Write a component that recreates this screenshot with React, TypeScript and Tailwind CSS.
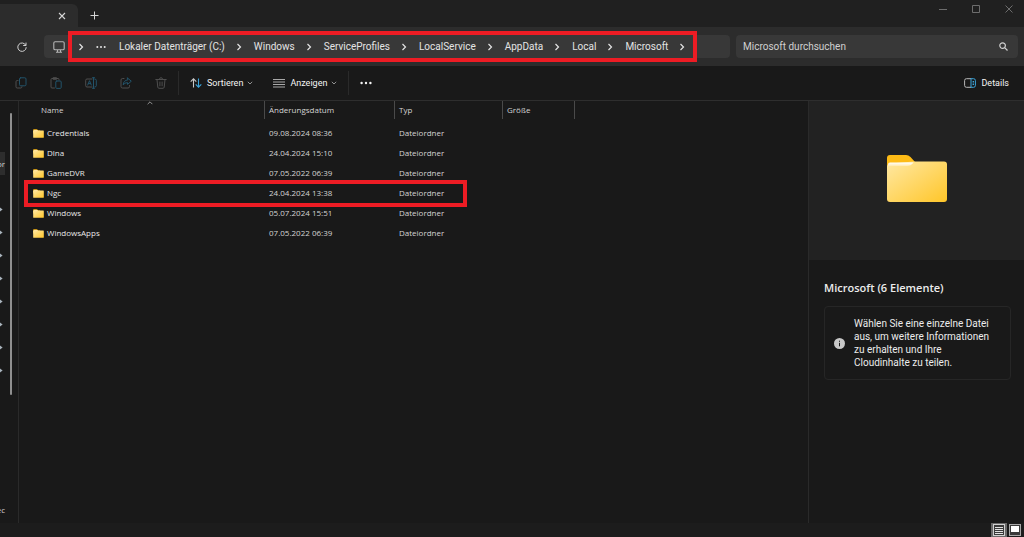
import React from "react";

type FileRow = { name: string; date: string; highlighted?: boolean };

const files: FileRow[] = [
  { name: "Credentials", date: "09.08.2024 08:36" },
  { name: "Dlna", date: "24.04.2024 15:10" },
  { name: "GameDVR", date: "07.05.2022 06:39" },
  { name: "Ngc", date: "24.04.2024 13:38", highlighted: true },
  { name: "Windows", date: "05.07.2024 15:51" },
  { name: "WindowsApps", date: "07.05.2022 06:39" },
];

const crumbs = [
  "Lokaler Datenträger (C:)",
  "Windows",
  "ServiceProfiles",
  "LocalService",
  "AppData",
  "Local",
  "Microsoft",
];

const pins = [0, 1, 2, 3, 4, 5, 6, 7];

function Chevron() {
  return (
    <svg viewBox="0 0 6 8" className="h-2 w-[6px] shrink-0" fill="none" stroke="currentColor" strokeWidth="1.2">
      <path d="M1.5 1 4.5 4 1.5 7" />
    </svg>
  );
}

function ChevronDown() {
  return (
    <svg viewBox="0 0 6 4" className="h-1 w-[6px] shrink-0 text-[#a0a0a0]" fill="none" stroke="currentColor" strokeWidth="0.9">
      <path d="M0.8 0.8 3 3 5.2 0.8" />
    </svg>
  );
}

function Dots({ className }: { className: string }) {
  return (
    <svg viewBox="0 0 12 4" className={className} fill="currentColor">
      <circle cx="1.6" cy="2" r="1.2" />
      <circle cx="6" cy="2" r="1.2" />
      <circle cx="10.4" cy="2" r="1.2" />
    </svg>
  );
}

function FolderIcon({ id, className }: { id: string; className: string }) {
  return (
    <svg viewBox="0 0 62 49" className={className} preserveAspectRatio="none">
      <defs>
        <linearGradient id={`${id}-front`} x1="0" y1="0" x2="1" y2="1">
          <stop offset="0" stopColor="#ffe8a3" />
          <stop offset="1" stopColor="#ffc629" />
        </linearGradient>
        <linearGradient id={`${id}-shine`} x1="0" y1="0" x2="0" y2="1">
          <stop offset="0" stopColor="#ffffff" />
          <stop offset="1" stopColor="#ffe49a" />
        </linearGradient>
      </defs>
      <path d="M1 4Q1 1 4 1H20Q22.500 1 24.500 3L29 8H40V24H1Z" fill="#fdbb16" />
      <path d="M1 13Q1 10 4 9.500L28 7.500H58Q61 7.500 61 10.500V45Q61 48 58 48H4Q1 48 1 45Z" fill={`url(#${id}-front)`} />
      <path d="M2 10.500Q2 8.500 4 8.500H27.500Q25 12 21 12H4Q2.500 12 2 13Z" fill={`url(#${id}-shine)`} />
    </svg>
  );
}

function ToolButton({ label, children }: { label: string; children: React.ReactNode }) {
  return (
    <button aria-label={label} className="flex h-6 w-[35px] items-center justify-center text-[#4e4e4e]">
      <svg viewBox="0 0 12 12" className="h-3 w-3" fill="none" stroke="currentColor" strokeWidth="1" strokeLinejoin="round" strokeLinecap="round">
        {children}
      </svg>
    </button>
  );
}

function TitleBar() {
  return (
    <header className="flex h-[27px] items-end justify-between bg-[#202020]">
      <div className="flex h-[23px] items-center">
        <div className="flex h-full w-[78px] items-center justify-end rounded-tr-md bg-[#2c2c2c] pr-3">
          <button aria-label="Tab schließen" className="text-[#d6d6d6]">
            <svg viewBox="0 0 8 8" className="h-2 w-2" fill="none" stroke="currentColor" strokeWidth="1.1">
              <path d="M1 1 7 7M7 1 1 7" />
            </svg>
          </button>
        </div>
        <button aria-label="Neuer Tab" className="flex w-8 justify-center text-[#d6d6d6]">
          <svg viewBox="0 0 9 9" className="h-[9px] w-[9px]" fill="none" stroke="currentColor" strokeWidth="1">
            <path d="M4.500 0.500V8.500M0.500 4.500H8.500" />
          </svg>
        </button>
      </div>
      <div className="flex gap-[25px] self-start pt-[5px] pr-[11px] text-[#6d6d6d]">
        <button aria-label="Minimieren">
          <svg viewBox="0 0 8 8" className="h-2 w-2" fill="none" stroke="currentColor"><path d="M0 4.500H8" /></svg>
        </button>
        <button aria-label="Maximieren">
          <svg viewBox="0 0 8 8" className="h-2 w-2" fill="none" stroke="currentColor"><path d="M0.500 0.500H7.500V7.500H0.500Z" /></svg>
        </button>
        <button aria-label="Schließen">
          <svg viewBox="0 0 8 8" className="h-2 w-2" fill="none" stroke="currentColor"><path d="M0.500 0.500 7.500 7.500M7.500 0.500 0.500 7.500" /></svg>
        </button>
      </div>
    </header>
  );
}

function AddressBar() {
  return (
    <div className="flex h-[39px] items-center gap-[6px] bg-[#2c2c2c] pr-[6px] font-[Roboto,sans-serif]">
      <button aria-label="Aktualisieren" className="flex w-[38px] shrink-0 justify-center pl-[6px] text-[#d0d0d0]">
        <svg viewBox="0 0 10 10" className="h-[10px] w-[10px]" fill="none" stroke="currentColor" strokeWidth="1">
          <path d="M8.800 3.400A4.200 4.200 0 1 0 9.200 5.200M9 0.600V3.500H6.200" />
        </svg>
      </button>
      <div className="flex h-[23px] min-w-0 flex-1 items-center rounded bg-[#383838] text-[#e4e4e4]">
        <div className="flex w-7 shrink-0 justify-center pl-[2px]">
          <svg viewBox="0 0 12 12" className="h-3 w-3" fill="none" stroke="#b4b4b4" strokeWidth="1.1">
            <rect x="0.800" y="0.800" width="10.400" height="8" rx="1.300" />
            <path d="M4.500 9V11M7.500 9V11M3 11.200H9" />
          </svg>
        </div>
        <nav aria-label="Adresse" className="flex h-full items-center pr-2 pl-[6px] outline-4 outline-[#ed1c24]">
          <Chevron />
          <button aria-label="Weitere Ordner" className="flex w-[33px] justify-center"><Dots className="h-1 w-[10px]" /></button>
          {crumbs.map((crumb) => (
            <React.Fragment key={crumb}>
              <a href="#" className="pr-[11px] pl-3 text-[10px] leading-4 whitespace-nowrap first-of-type:pl-[2px]">{crumb}</a>
              <Chevron />
            </React.Fragment>
          ))}
        </nav>
      </div>
      <label className="flex h-[23px] w-[282px] shrink-0 items-center rounded bg-[#383838] pr-[10px] pl-[7px]">
        <input type="search" aria-label="Microsoft durchsuchen" placeholder="Microsoft durchsuchen" className="min-w-0 flex-1 bg-transparent text-[10px] leading-4 text-[#d0d0d0] outline-none placeholder:text-[#d0d0d0]" />
        <svg viewBox="0 0 9 9" className="h-[9px] w-[9px]" fill="none" stroke="#d0d0d0" strokeWidth="1.200">
          <circle cx="3.600" cy="3.600" r="2.800" />
          <path d="M5.700 5.700 8.500 8.500" />
        </svg>
      </label>
    </div>
  );
}

function Toolbar() {
  return (
    <div className="flex h-[35px] items-center justify-between border-b border-[#2e2e2e] bg-[#191919] font-[Roboto,sans-serif] text-[9px] leading-4 text-[#f4f4f4]">
      <div className="flex items-center">
        <div className="flex pl-[3px]">
          <ToolButton label="Kopieren">
            <rect x="4.500" y="0.800" width="6.500" height="8" rx="1.200" stroke="#22536a" />
            <path d="M3 3.500H2.200Q1 3.500 1 4.700V9.800Q1 11 2.200 11H5.800Q7 11 7 9.800" />
          </ToolButton>
          <ToolButton label="Einfügen">
            <path d="M4.500 11H2Q1 11 1 10V2.500Q1 1.500 2 1.500H8Q9 1.500 9 2.500V3M3.500 0.700H6.500V2.300H3.500Z" />
            <rect x="5.800" y="4" width="5.400" height="7.400" rx="1" stroke="#22536a" />
          </ToolButton>
          <ToolButton label="Umbenennen">
            <path d="M7 10H2Q0.700 10 0.700 8.700V3.300Q0.700 2 2 2H7" />
            <path d="M2.700 8 4.500 3.700 6.300 8M3.300 6.600H5.700M7.500 0.700H9.500M8.500 0.700V11.300M7.500 11.300H9.500M9.800 2Q11.300 2 11.300 3.300V8.700Q11.300 10 9.800 10" stroke="#22536a" />
          </ToolButton>
          <ToolButton label="Freigeben">
            <path d="M4 1.500H2.500Q1 1.500 1 3V9.500Q1 11 2.500 11H8Q9.500 11 9.500 9.500V8.500" />
            <path d="M7.500 1 11.300 4.200 7.500 7.400V5.600Q4.600 5.500 3.200 8Q3.400 3.400 7.500 2.900Z" stroke="#22536a" />
          </ToolButton>
          <ToolButton label="Löschen">
            <path d="M0.800 2.500H11.200M4.300 2.300Q4.500 0.700 6 0.700T7.700 2.300M2 2.700 2.800 10.200Q3 11.300 4 11.300H8Q9 11.300 9.200 10.200L10 2.700M4.900 5V8.800M7.100 5V8.800" />
          </ToolButton>
        </div>
        <button className="flex h-6 items-center gap-1 border-l border-[#2a2a2a] pr-[13px] pl-[11px]">
          <svg viewBox="0 0 12 10" className="mr-px h-[10px] w-3" fill="none" strokeWidth="1.100">
            <path d="M3.500 9.500V1M0.700 3.700 3.500 0.900 6.300 3.700" stroke="#c8c8c8" />
            <path d="M8.500 0.500V9M5.700 6.300 8.500 9.100 11.300 6.300" stroke="#3ba5dc" />
          </svg>
          <span className="whitespace-nowrap">Sortieren</span>
          <ChevronDown />
        </button>
        <button className="flex h-6 items-center gap-1 border-r border-[#2a2a2a] pr-[11px] pl-[7px]">
          <svg viewBox="0 0 12 9" className="mr-px h-[9px] w-3" stroke="#a8a8a8" strokeWidth="1">
            <path d="M0 0.500H12M0 3H12M0 5.500H12M0 8H12" />
          </svg>
          <span className="whitespace-nowrap">Anzeigen</span>
          <ChevronDown />
        </button>
        <button aria-label="Mehr anzeigen" className="px-[11px]"><Dots className="h-1 w-3" /></button>
      </div>
      <button className="flex items-center gap-[5px] pr-[15px]">
        <svg viewBox="0 0 12 10" className="h-[10px] w-3" fill="none" strokeWidth="1">
          <path d="M7 0.700H2.500Q0.600 0.700 0.600 2.500V7.500Q0.600 9.300 2.500 9.300H7" stroke="#b8b8b8" />
          <path d="M7 0.700H9.500Q11.400 0.700 11.400 2.500V7.500Q11.400 9.300 9.500 9.300H7ZM8.600 3.500H10M8.600 5H10M8.600 6.500H10" stroke="#3ba5dc" />
        </svg>
        Details
      </button>
    </div>
  );
}

function Sidebar() {
  return (
    <aside className="flex w-[19px] shrink-0 items-stretch border-r border-[#2a2a2a] bg-[#191919] text-[8px] leading-4 text-[#d0d0d0]">
      <div className="flex w-[5px] flex-col pt-[51px]">
        <div className="mb-[23px] flex h-[23px] items-center justify-end bg-[#2d2d2d]">or</div>
        {pins.map((pin) => (
          <div key={pin} className="flex h-[23px] items-center">
            <svg viewBox="0 0 3 5" className="h-[5px] w-[3px]" fill="#a9b4bd"><path d="M0 0.500 2.600 2.500 0 4.500Z" /></svg>
          </div>
        ))}
        <div className="mt-auto mb-[5px] flex justify-end">ec</div>
      </div>
      <div className="mt-3 ml-[5px] h-[282px] w-[2px] rounded-full bg-[#8f8f8f]" />
    </aside>
  );
}

function FileTable() {
  return (
    <main className="min-w-0 flex-1 bg-[#191919]">
      <table className="w-[556px] table-fixed border-collapse text-left text-[8px] leading-4 text-[#d4d4d4]">
        <colgroup>
          <col className="w-[246px]" />
          <col className="w-[130px]" />
          <col className="w-[108px]" />
          <col className="w-[72px]" />
        </colgroup>
        <thead>
          <tr className="h-[22px] align-top">
            <th className="p-0 font-normal">
              <div className="relative flex h-[18px] items-center border-r border-[#4a4a4a] pl-[22px]">
                Name
                <svg viewBox="0 0 6 4" className="absolute top-0 left-[128px] h-1 w-[6px]" fill="none" stroke="#a0a0a0" strokeWidth="0.900">
                  <path d="M0.600 3.200 3 0.800 5.400 3.200" />
                </svg>
              </div>
            </th>
            <th className="p-0 font-normal"><div className="flex h-[18px] items-center border-r border-[#4a4a4a] pl-1">Änderungsdatum</div></th>
            <th className="p-0 font-normal"><div className="flex h-[18px] items-center border-r border-[#4a4a4a] pl-1">Typ</div></th>
            <th className="p-0 font-normal"><div className="flex h-[18px] items-center border-r border-[#4a4a4a] pl-1">Größe</div></th>
          </tr>
        </thead>
        <tbody>
          {files.map((file) => (
            <tr key={file.name} className="h-5">
              <td className="relative p-0 pl-[14px] text-[#e8e8e8]">
                {file.highlighted && (
                  <span className="pointer-events-none absolute -top-[3px] left-[5px] h-[27px] w-[443px] border-4 border-[#ed1c24]" />
                )}
                <span className="flex items-center gap-[3px]">
                  <FolderIcon id={file.name} className="h-[9px] w-[11px]" />
                  {file.name}
                </span>
              </td>
              <td className="p-0 pl-1">{file.date}</td>
              <td className="p-0 pl-1">Dateiordner</td>
              <td className="p-0" />
            </tr>
          ))}
        </tbody>
      </table>
    </main>
  );
}

function DetailsPane() {
  return (
    <aside className="w-[216px] shrink-0 border-l border-[#2a2a2a] bg-[#191919] text-[#ececec]">
      <div className="flex h-[159px] items-center justify-center bg-[#222222] pb-1">
        <FolderIcon id="preview" className="h-[49px] w-[62px]" />
      </div>
      <div className="pt-5 pr-[13px] pl-[15px]">
        <h2 className="text-[11px] leading-4 font-semibold whitespace-nowrap">Microsoft (6 Elemente)</h2>
        <div className="mt-[10px] flex items-center gap-[9px] rounded border border-[#262626] px-[9px] py-[10px]">
          <svg viewBox="0 0 11 11" className="h-[11px] w-[11px] shrink-0">
            <circle cx="5.500" cy="5.500" r="5.500" fill="#c8c8c8" />
            <path d="M5.500 4.800V8.300M5.500 2.700V3.800" stroke="#191919" strokeWidth="1" />
          </svg>
          <p className="font-[Roboto,sans-serif] text-[10px] leading-[13px]">
            Wählen Sie eine einzelne Datei<br />
            aus, um weitere Informationen<br />
            zu erhalten und Ihre<br />
            Cloudinhalte zu teilen.
          </p>
        </div>
      </div>
    </aside>
  );
}

function StatusBar() {
  return (
    <footer className="flex h-[14px] items-stretch justify-end bg-[#1c1c1c] pr-[2px]">
      <button aria-label="Detailansicht" className="flex w-4 items-center justify-center bg-[#6a6a6a]">
        <svg viewBox="0 0 12 12" className="h-3 w-3" fill="none">
          <rect x="0.500" y="0.500" width="11" height="11" fill="#3a3a3a" stroke="#d0d0d0" />
          <path d="M2 3.500H10M2 5.500H10M2 7.500H10M2 9.500H10" stroke="#e0e0e0" />
        </svg>
      </button>
      <button aria-label="Symbolansicht" className="flex w-[15px] items-center justify-center">
        <svg viewBox="0 0 12 12" className="h-3 w-3" fill="none">
          <rect x="0.500" y="0.500" width="11" height="11" fill="#3a3a3a" stroke="#a8a8a8" />
          <rect x="2" y="2" width="8" height="6" fill="#ffffff" />
        </svg>
      </button>
    </footer>
  );
}

export default function App() {
  return (
    <div className="flex min-h-screen flex-col bg-[#191919] font-['Open_Sans','Noto_Sans',sans-serif]">
      <TitleBar />
      <AddressBar />
      <Toolbar />
      <div className="flex flex-1 items-stretch">
        <Sidebar />
        <FileTable />
        <DetailsPane />
      </div>
      <StatusBar />
    </div>
  );
}
